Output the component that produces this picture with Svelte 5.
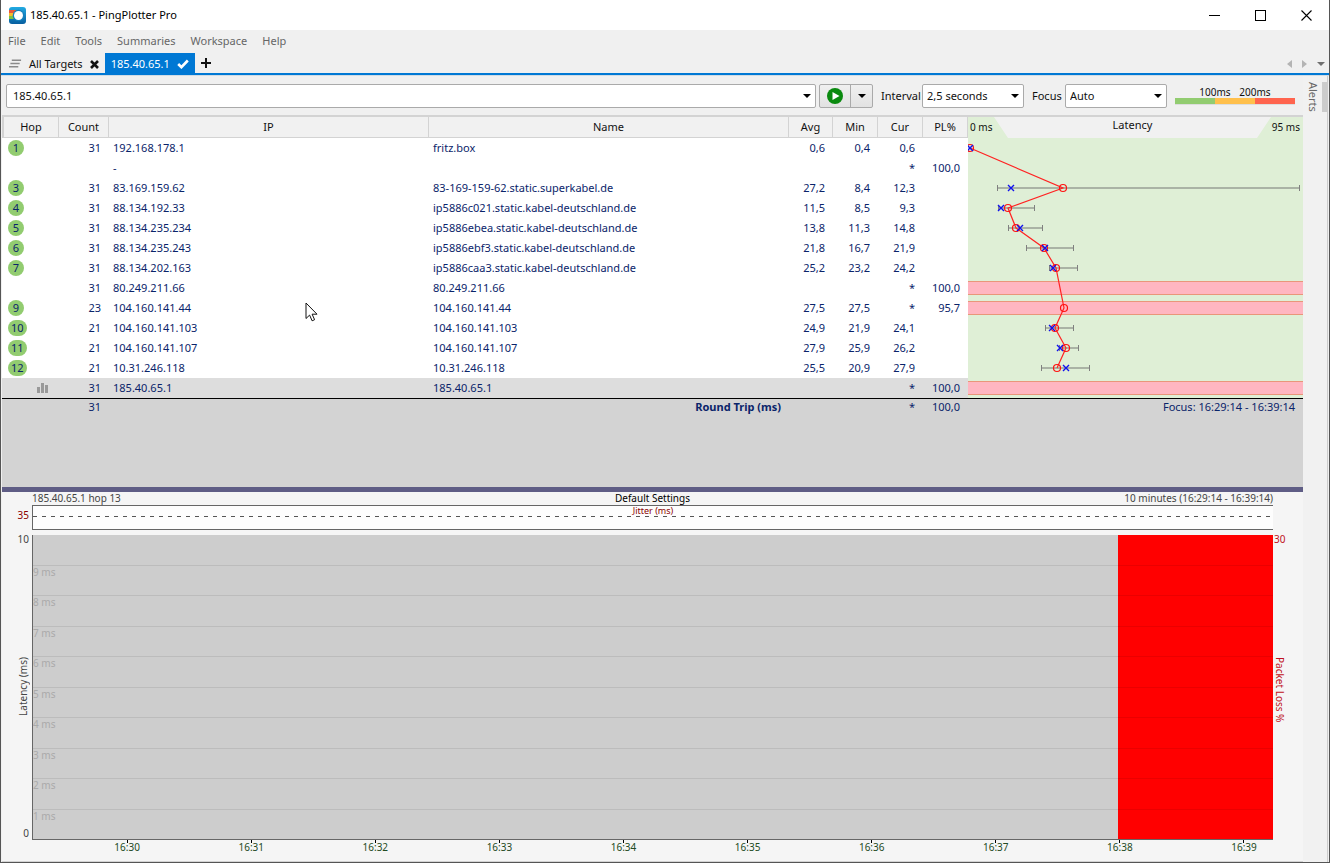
<script lang="ts">
    type Hop = {
        hop: number | null;
        count: number | null;
        ip: string;
        name: string;
        avg?: number;
        min?: number;
        cur?: number | null;
        max?: number;
        loss?: number;
        selected?: boolean;
    };

    const menus = ['File', 'Edit', 'Tools', 'Summaries', 'Workspace', 'Help'];

    const hops: Hop[] = [
        { hop: 1, count: 31, ip: '192.168.178.1', name: 'fritz.box', avg: 0.6, min: 0.4, cur: 0.6, max: 1 },
        { hop: null, count: null, ip: '-', name: '', cur: null, loss: 100 },
        { hop: 3, count: 31, ip: '83.169.159.62', name: '83-169-159-62.static.superkabel.de', avg: 27.2, min: 8.4, cur: 12.3, max: 94.6 },
        { hop: 4, count: 31, ip: '88.134.192.33', name: 'ip5886c021.static.kabel-deutschland.de', avg: 11.5, min: 8.5, cur: 9.3, max: 18.9 },
        { hop: 5, count: 31, ip: '88.134.235.234', name: 'ip5886ebea.static.kabel-deutschland.de', avg: 13.8, min: 11.3, cur: 14.8, max: 21 },
        { hop: 6, count: 31, ip: '88.134.235.243', name: 'ip5886ebf3.static.kabel-deutschland.de', avg: 21.8, min: 16.7, cur: 21.9, max: 29.9 },
        { hop: 7, count: 31, ip: '88.134.202.163', name: 'ip5886caa3.static.kabel-deutschland.de', avg: 25.2, min: 23.2, cur: 24.2, max: 31.2 },
        { hop: null, count: 31, ip: '80.249.211.66', name: '80.249.211.66', cur: null, loss: 100 },
        { hop: 9, count: 23, ip: '104.160.141.44', name: '104.160.141.44', avg: 27.5, min: 27.5, cur: null, loss: 95.7 },
        { hop: 10, count: 21, ip: '104.160.141.103', name: '104.160.141.103', avg: 24.9, min: 21.9, cur: 24.1, max: 29.9 },
        { hop: 11, count: 21, ip: '104.160.141.107', name: '104.160.141.107', avg: 27.9, min: 25.9, cur: 26.2, max: 31.5 },
        { hop: 12, count: 21, ip: '10.31.246.118', name: '10.31.246.118', avg: 25.5, min: 20.9, cur: 27.9, max: 34.5 },
        { hop: null, count: 31, ip: '185.40.65.1', name: '185.40.65.1', cur: null, loss: 100, selected: true },
    ];

    const ROW = 20;
    const PX_PER_MS = 3.5;

    const px = (ms: number) => Math.round(ms * PX_PER_MS);
    const rowY = (i: number) => i * ROW + ROW / 2;
    const fmt = (n?: number | null) => (n === null ? '*' : n === undefined ? '' : n.toFixed(1).replace('.', ','));

    const points = hops
        .map((h, i) => ({ ...h, i }))
        .filter((h) => h.avg !== undefined);
    const avgLine = points.map((p) => `${px(p.avg!)},${rowY(p.i)}`).join(' ');

    const levels = [10, 9, 8, 7, 6, 5, 4, 3, 2, 1];
    const times = Array.from({ length: 10 }, (_, i) => `16:${30 + i}`);

    // the outage covers the last eighth of the visible window
    const outageWidth = 12.5;

    let target = $state('185.40.65.1');
    let interval = $state('2,5 seconds');
    let focus = $state('Auto');
</script>

<div class="window">
    <header class="titlebar">
        <svg class="logo" width="17" height="17" viewBox="0 0 17 17">
            <defs>
                <linearGradient id="logo-bg" x1="0" y1="0" x2="0" y2="1">
                    <stop offset="0" stop-color="#22aae2" />
                    <stop offset="1" stop-color="#075fa0" />
                </linearGradient>
            </defs>
            <rect width="17" height="17" rx="3" fill="url(#logo-bg)" />
            <path d="M0 3h7v3H0z" fill="#e9573a" />
            <path d="M0 6h6v3H0z" fill="#fbb829" />
            <path d="M0 9h6v3H0z" fill="#7cc243" />
            <circle cx="9.5" cy="8.5" r="5.8" fill="#1580bd" />
            <circle cx="9.5" cy="8.5" r="4.5" fill="#fff" />
        </svg>
        <h1>185.40.65.1 - PingPlotter Pro</h1>
        <button type="button" class="caption" aria-label="Minimize">
            <svg width="11" height="11"><path d="M0 5.5h11" stroke="#000" /></svg>
        </button>
        <button type="button" class="caption" aria-label="Maximize">
            <svg width="11" height="11"><rect x=".5" y=".5" width="10" height="10" fill="none" stroke="#000" /></svg>
        </button>
        <button type="button" class="caption" aria-label="Close">
            <svg width="11" height="11"><path d="M.5.5l10 10M10.5.5l-10 10" stroke="#000" stroke-width="1.1" /></svg>
        </button>
    </header>

    <nav class="menubar">
        {#each menus as menu}
            <button type="button">{menu}</button>
        {/each}
    </nav>

    <div class="tabs">
        <button type="button" class="tab">
            <svg width="13" height="10" viewBox="0 0 14 10">
                <path d="M3 1h10M1.5 4.5h10M0 8h10" stroke="#8a8a8a" stroke-width="1.6" />
            </svg>
            All Targets
            <svg width="9" height="9" viewBox="0 0 9 9">
                <path d="M1 1l7 7M8 1l-7 7" stroke="#111" stroke-width="2.6" />
            </svg>
        </button>
        <button type="button" class="tab active">
            185.40.65.1
            <svg width="12" height="10" viewBox="0 0 12 10">
                <path d="M1.2 5l3.2 3.2L10.8 1.5" fill="none" stroke="#fff" stroke-width="2.6" />
            </svg>
        </button>
        <button type="button" class="add" aria-label="New tab">
            <svg width="10" height="10"><path d="M0 5h10M5 0v10" stroke="#111" stroke-width="2" /></svg>
        </button>
        <div class="tab-nav">
            <button type="button" aria-label="Previous tab">
                <svg width="5" height="8"><path d="M5 0v8L0 4z" fill="#b4b4b4" /></svg>
            </button>
            <button type="button" aria-label="Next tab">
                <svg width="5" height="8"><path d="M0 0v8l5-4z" fill="#b4b4b4" /></svg>
            </button>
            <button type="button" class="list" aria-label="Tab list">
                <svg width="8" height="4"><path d="M0 0h8L4 4z" fill="#707070" /></svg>
            </button>
        </div>
    </div>

    <div class="body">
        <main>
            <div class="toolbar">
                <div class="combo target">
                    <input type="text" aria-label="Target" bind:value={target} />
                    <button type="button" aria-label="Recent targets">
                        <svg width="8" height="4"><path d="M0 0h8L4 4z" /></svg>
                    </button>
                </div>
                <div class="split">
                    <button type="button" class="play" aria-label="Start trace">
                        <svg width="16" height="16" viewBox="0 0 16 16">
                            <circle cx="8" cy="8" r="8" fill="#0a8a0f" />
                            <path d="M5.5 4v8l7-4z" fill="#fff" />
                        </svg>
                    </button>
                    <button type="button" class="more" aria-label="Trace options">
                        <svg width="8" height="4"><path d="M0 0h8L4 4z" /></svg>
                    </button>
                </div>
                <label for="interval">Interval</label>
                <div class="combo">
                    <select id="interval" bind:value={interval}>
                        <option>1 second</option>
                        <option>2,5 seconds</option>
                        <option>5 seconds</option>
                    </select>
                    <svg class="arrow" width="8" height="4"><path d="M0 0h8L4 4z" /></svg>
                </div>
                <label for="focus">Focus</label>
                <div class="combo">
                    <select id="focus" bind:value={focus}>
                        <option>Auto</option>
                        <option>10 minutes</option>
                        <option>60 minutes</option>
                    </select>
                    <svg class="arrow" width="8" height="4"><path d="M0 0h8L4 4z" /></svg>
                </div>
                <div class="legend">
                    <div class="legend-labels"><span>100ms</span><span>200ms</span></div>
                    <div class="legend-bar"><i class="good"></i><i class="warn"></i><i class="bad"></i></div>
                </div>
            </div>

            <section class="trace">
                <table>
                    <colgroup>
                        <col class="c-hop" />
                        <col class="c-count" />
                        <col class="c-ip" />
                        <col />
                        <col class="c-avg" />
                        <col class="c-num" />
                        <col class="c-num" />
                        <col class="c-num" />
                    </colgroup>
                    <thead>
                        <tr>
                            <th>Hop</th>
                            <th>Count</th>
                            <th>IP</th>
                            <th>Name</th>
                            <th>Avg</th>
                            <th>Min</th>
                            <th>Cur</th>
                            <th>PL%</th>
                        </tr>
                    </thead>
                    <tbody>
                        {#each hops as h}
                            <tr class:selected={h.selected}>
                                <td class="hop">
                                    {#if h.hop}
                                        <span class="badge">{h.hop}</span>
                                    {:else if h.selected}
                                        <svg class="bars" width="11" height="10">
                                            <path d="M0 4h3v6H0zM4 0h3v10H4zM8 2h3v8H8z" fill="#999" />
                                        </svg>
                                    {/if}
                                </td>
                                <td class="num">{h.count ?? ''}</td>
                                <td>{h.ip}</td>
                                <td>{h.name}</td>
                                <td class="num">{fmt(h.avg)}</td>
                                <td class="num">{fmt(h.min)}</td>
                                <td class="num">{fmt(h.cur)}</td>
                                <td class="num">{fmt(h.loss)}</td>
                            </tr>
                        {/each}
                    </tbody>
                    <tfoot>
                        <tr>
                            <td></td>
                            <td class="num">31</td>
                            <td></td>
                            <td class="num total">Round Trip (ms)</td>
                            <td></td>
                            <td></td>
                            <td class="num">*</td>
                            <td class="num">100,0</td>
                        </tr>
                    </tfoot>
                </table>

                <div class="graph">
                    <div class="graph-head">
                        <span class="from">0 ms</span>
                        <span class="caption-text">Latency</span>
                        <span class="to">95 ms</span>
                    </div>
                    <svg class="graph-body" width="100%" height={hops.length * ROW}>
                        {#each hops as h, i}
                            {#if h.loss && h.count}
                                <rect x="0" y={i * ROW + 3} width="100%" height="14" fill="#e9967a" />
                                <rect x="0" y={i * ROW + 4} width="100%" height="12" fill="#ffb6c1" />
                            {/if}
                        {/each}
                        {#each points as p}
                            {#if p.max && p.hop !== 1}
                                <rect x={px(p.min!)} y={rowY(p.i) - 1} width={px(p.max) - px(p.min!)} height="2" fill="#aab3a5" />
                                <rect x={px(p.min!)} y={rowY(p.i) - 3} width="1" height="6" fill="#808080" />
                                <rect x={px(p.max)} y={rowY(p.i) - 3} width="1" height="6" fill="#808080" />
                            {/if}
                        {/each}
                        <polyline points={avgLine} fill="none" stroke="#f22" stroke-width="1.2" />
                        {#each points as p}
                            <circle cx={px(p.avg!)} cy={rowY(p.i)} r="3.5" fill="none" stroke="#f11" stroke-width="1.2" />
                            {#if p.cur}
                                <path
                                    d="M{px(p.cur) - 3} {rowY(p.i) - 3}l6 6m0-6l-6 6"
                                    stroke="#11e"
                                    stroke-width="1.4"
                                />
                            {/if}
                        {/each}
                    </svg>
                    <div class="focus-range">Focus: 16:29:14 - 16:39:14</div>
                </div>
            </section>

            <section class="timeline">
                <div class="timeline-head">
                    <span>185.40.65.1 hop 13</span>
                    <span class="mid">Default Settings</span>
                    <span class="end">10 minutes (16:29:14 - 16:39:14)</span>
                </div>

                <div class="axis jitter-axis">35</div>
                <div class="jitter">
                    <span>Jitter (ms)</span>
                    <svg width="100%" height="1">
                        <line x1="0" y1=".5" x2="100%" y2=".5" stroke="#555" stroke-dasharray="4 5" />
                    </svg>
                </div>

                <div class="axis left">
                    <span>10</span>
                    <span class="vertical up">Latency (ms)</span>
                    <span>0</span>
                </div>
                <div class="plot">
                    <div class="outage" style="width: {outageWidth}%;"></div>
                    {#each levels as level}
                        <div class="level">{level < 10 ? `${level} ms` : ''}</div>
                    {/each}
                </div>
                <div class="axis right">
                    <span>30</span>
                    <span class="vertical">Packet Loss %</span>
                    <span></span>
                </div>

                <div class="times">
                    {#each times as time}
                        <span>{time}</span>
                    {/each}
                </div>
            </section>
        </main>

        <aside>
            <button type="button">Alerts</button>
        </aside>
    </div>

    <svg class="pointer" width="13" height="20" viewBox="0 0 13 20">
        <path d="M1 1v15.5l3.6-3.4 2.5 5.7 2.5-1.1-2.5-5.5h4.9z" fill="#fff" stroke="#111" />
    </svg>
</div>

<style>
    :global(body) {
        margin: 0;
        background: #f0f0f0;
    }

    .window {
        position: relative;
        box-sizing: border-box;
        display: flex;
        flex-direction: column;
        min-height: 100vh;
        border: 1px solid #555;
        border-top: 0;
        background: #f0f0f0;
        color: #111;
        font: 11px/16px 'Noto Sans', 'Open Sans', sans-serif;
    }

    button,
    input,
    select {
        margin: 0;
        padding: 0;
        border: 0;
        background: none;
        color: inherit;
        font: inherit;
    }

    svg {
        display: block;
        flex-shrink: 0;
    }

    .titlebar {
        display: flex;
        align-items: center;
        height: 30px;
        padding-left: 8px;
        background: #fff;
    }

    h1 {
        flex: 1;
        margin: 0 0 0 4px;
        color: #000;
        font-size: 11px;
        font-weight: 400;
    }

    .caption {
        display: flex;
        align-items: center;
        justify-content: center;
        width: 46px;
        height: 30px;
    }

    .menubar {
        display: flex;
        gap: 15px;
        padding: 3px 7px 4px;
        color: #666;
    }

    .tabs {
        display: flex;
        height: 20px;
        border-bottom: 2px solid #0078d4;
        box-shadow: 0 1px #d0dce6;
    }

    .tab {
        display: flex;
        align-items: center;
        gap: 7px;
        padding: 2px 6px 0 8px;
    }

    .tab.active {
        padding: 2px 6px 0;
        background: #0078d4;
        color: #fff;
    }

    .add {
        padding: 0 6px;
    }

    .tab-nav {
        display: flex;
        align-items: center;
        gap: 10px;
        margin-left: auto;
        padding: 2px 4px 0 0;
    }

    .body {
        flex: 1;
        display: flex;
        margin: 1px 1px 0;
    }

    main {
        flex: 1;
        min-width: 0;
        display: flex;
        flex-direction: column;
    }

    .toolbar {
        display: flex;
        align-items: center;
        height: 39px;
        padding: 0 8px 0 4px;
        border-bottom: 2px solid #d3d3d3;
    }

    .combo {
        position: relative;
        box-sizing: border-box;
        display: flex;
        align-items: center;
        width: 102px;
        height: 24px;
        border: 1px solid #aaa;
        border-radius: 2px;
        background: #fff;
    }

    .combo.target {
        flex: 1;
        width: auto;
        margin-right: 3px;
    }

    .combo input {
        flex: 1;
        min-width: 0;
        padding-left: 6px;
    }

    .combo button {
        padding: 0 4px;
    }

    .combo select {
        appearance: none;
        width: 100%;
        height: 22px;
        padding-left: 4px;
    }

    .arrow {
        position: absolute;
        right: 4px;
        pointer-events: none;
    }

    .split {
        box-sizing: border-box;
        display: flex;
        width: 54px;
        height: 24px;
        border: 1px solid #aaa;
        border-radius: 2px;
        background: linear-gradient(#f0f0f0, #e2e2e2);
    }

    .split button {
        flex: 1;
        display: flex;
        align-items: center;
        justify-content: center;
    }

    .split .play {
        flex: 0 0 31px;
        border-right: 1px solid #aaa;
    }

    label {
        width: 39px;
        margin: 0 2px 0 8px;
        white-space: nowrap;
    }

    label[for='focus'] {
        width: 31px;
    }

    .legend {
        width: 120px;
        margin-left: 8px;
        font-size: 10px;
        line-height: 12px;
    }

    .legend-labels {
        display: flex;
        padding: 0 20px;
    }

    .legend-labels span {
        flex: 1;
        text-align: center;
    }

    .legend-bar {
        display: flex;
        border-bottom: 1px solid #ddd;
    }

    .legend-bar i {
        flex: 1;
        height: 6px;
    }

    .good {
        background: #92cc70;
    }

    .warn {
        background: #ffc04c;
    }

    .bad {
        background: #ff644e;
    }

    .trace {
        display: flex;
        align-items: flex-start;
        min-height: 370px;
        border-bottom: 5px solid #5f5d85;
        background: #d3d3d3;
        color: #0a246a;
    }

    table {
        flex: 1;
        min-width: 0;
        table-layout: fixed;
        border-collapse: separate;
        border-spacing: 0;
    }

    .c-hop {
        width: 57px;
    }

    .c-count {
        width: 50px;
    }

    .c-ip {
        width: 320px;
    }

    .c-avg {
        width: 44px;
    }

    .c-num {
        width: 45px;
    }

    th {
        box-sizing: border-box;
        height: 21px;
        padding: 0;
        border-right: 1px solid #d3d3d3;
        border-bottom: 1px solid #d3d3d3;
        background: #f1f1f1;
        color: #111;
        font-weight: 400;
    }

    th:first-child {
        border-left: 2px solid #d3d3d3;
    }

    td {
        height: 20px;
        padding: 0 0 0 4px;
        white-space: nowrap;
    }

    tbody {
        background: #fff;
    }

    .num {
        padding: 0 8px 0 0;
        text-align: right;
    }

    .total {
        font-weight: 700;
    }

    .selected {
        background: #ddd;
    }

    .hop {
        padding-left: 6px;
    }

    .badge {
        box-sizing: border-box;
        display: block;
        width: fit-content;
        min-width: 16px;
        padding: 0 3px;
        border-radius: 8px;
        background: #92cc70;
        text-align: center;
    }

    .bars {
        margin-left: 29px;
    }

    tfoot td {
        height: 16px;
        border-top: 1px solid #000;
    }

    .graph {
        width: 335px;
    }

    .graph-head {
        display: flex;
        height: 21px;
        background: #dfefd6;
        color: #111;
        font-size: 10px;
        line-height: 21px;
        white-space: nowrap;
    }

    .from {
        width: 26px;
        padding-left: 2px;
        box-sizing: border-box;
    }

    .to {
        width: 32px;
        padding-right: 3px;
        box-sizing: border-box;
        display: flex;
        justify-content: flex-end;
    }

    .caption-text {
        flex: 1;
        background: #f1f1f1;
        clip-path: polygon(0 0, 100% 0, calc(100% - 14px) 100%, 14px 100%);
        font-size: 11px;
        line-height: 16px;
        text-align: center;
    }

    .graph-body {
        background: #dfefd6;
    }

    .focus-range {
        padding-right: 8px;
        border-top: 1px solid #000;
        text-align: right;
    }

    .timeline {
        flex: 1;
        display: grid;
        grid-template-columns: 30px minmax(0, 1fr) 30px;
        grid-template-rows: 13px 25px 5px minmax(200px, 1fr) 21px;
        background: #f5f5f5;
        color: #444;
        font-size: 10px;
        line-height: 12px;
        border-bottom: 1px solid #d3d3d3;
    }

    .timeline-head {
        grid-column: 2;
        display: grid;
        grid-template-columns: 1fr auto 1fr;
    }

    .mid {
        color: #000;
    }

    .end {
        text-align: right;
    }

    .axis {
        text-align: right;
        padding-right: 3px;
    }

    .jitter-axis {
        grid-column: 1;
        grid-row: 2;
        padding-top: 4px;
        color: #8b0000;
    }

    .jitter {
        grid-column: 2;
        grid-row: 2;
        box-sizing: border-box;
        border: solid #666;
        border-width: 1px 0 1px 1px;
        background: #fdfdfd;
        color: #8b0000;
        font-size: 9px;
        line-height: 10px;
        text-align: center;
    }

    .jitter span {
        display: block;
    }

    .left,
    .right {
        grid-row: 4;
        display: flex;
        flex-direction: column;
        align-items: flex-end;
        justify-content: space-between;
        padding-bottom: 3px;
        line-height: 8px;
    }

    .right {
        align-items: flex-start;
        padding: 0 0 3px 1px;
        color: #c01020;
    }

    .vertical {
        writing-mode: vertical-rl;
        line-height: 12px;
    }

    .up {
        transform: rotate(180deg);
    }

    .plot {
        grid-column: 2;
        grid-row: 4;
        position: relative;
        display: flex;
        flex-direction: column;
        border-left: 1px solid #666;
        border-bottom: 1px solid #666;
        background: #cdcdcd;
        color: #aaa;
    }

    .outage {
        position: absolute;
        top: 0;
        right: 0;
        bottom: 0;
        background: #f00;
    }

    .level {
        position: relative;
        flex: 1;
    }

    .level + .level {
        border-top: 1px solid rgba(0, 0, 0, 0.08);
    }

    .times {
        grid-column: 2;
        grid-row: 5;
        display: flex;
        color: #234a23;
    }

    /* the window starts 16 s before the first label's slot */
    .times::before {
        content: '';
        flex: 0 0 calc(100% * 16 / 600);
    }

    .times span {
        flex: 0 0 10%;
        text-align: center;
    }

    .times span::before {
        content: '';
        display: block;
        width: 1px;
        height: 3px;
        margin: 0 auto -2px;
        background: #000;
    }

    aside {
        width: 25px;
        padding-top: 6px;
        border-right: 1px solid #ccc;
        box-sizing: border-box;
        background: #f1f1f1;
        color: #666;
    }

    aside button {
        display: block;
        width: 24px;
        height: 30px;
        border-right: 5px solid #ccc;
        writing-mode: vertical-rl;
    }

    .pointer {
        position: absolute;
        left: 304px;
        top: 302px;
        pointer-events: none;
    }
</style>
